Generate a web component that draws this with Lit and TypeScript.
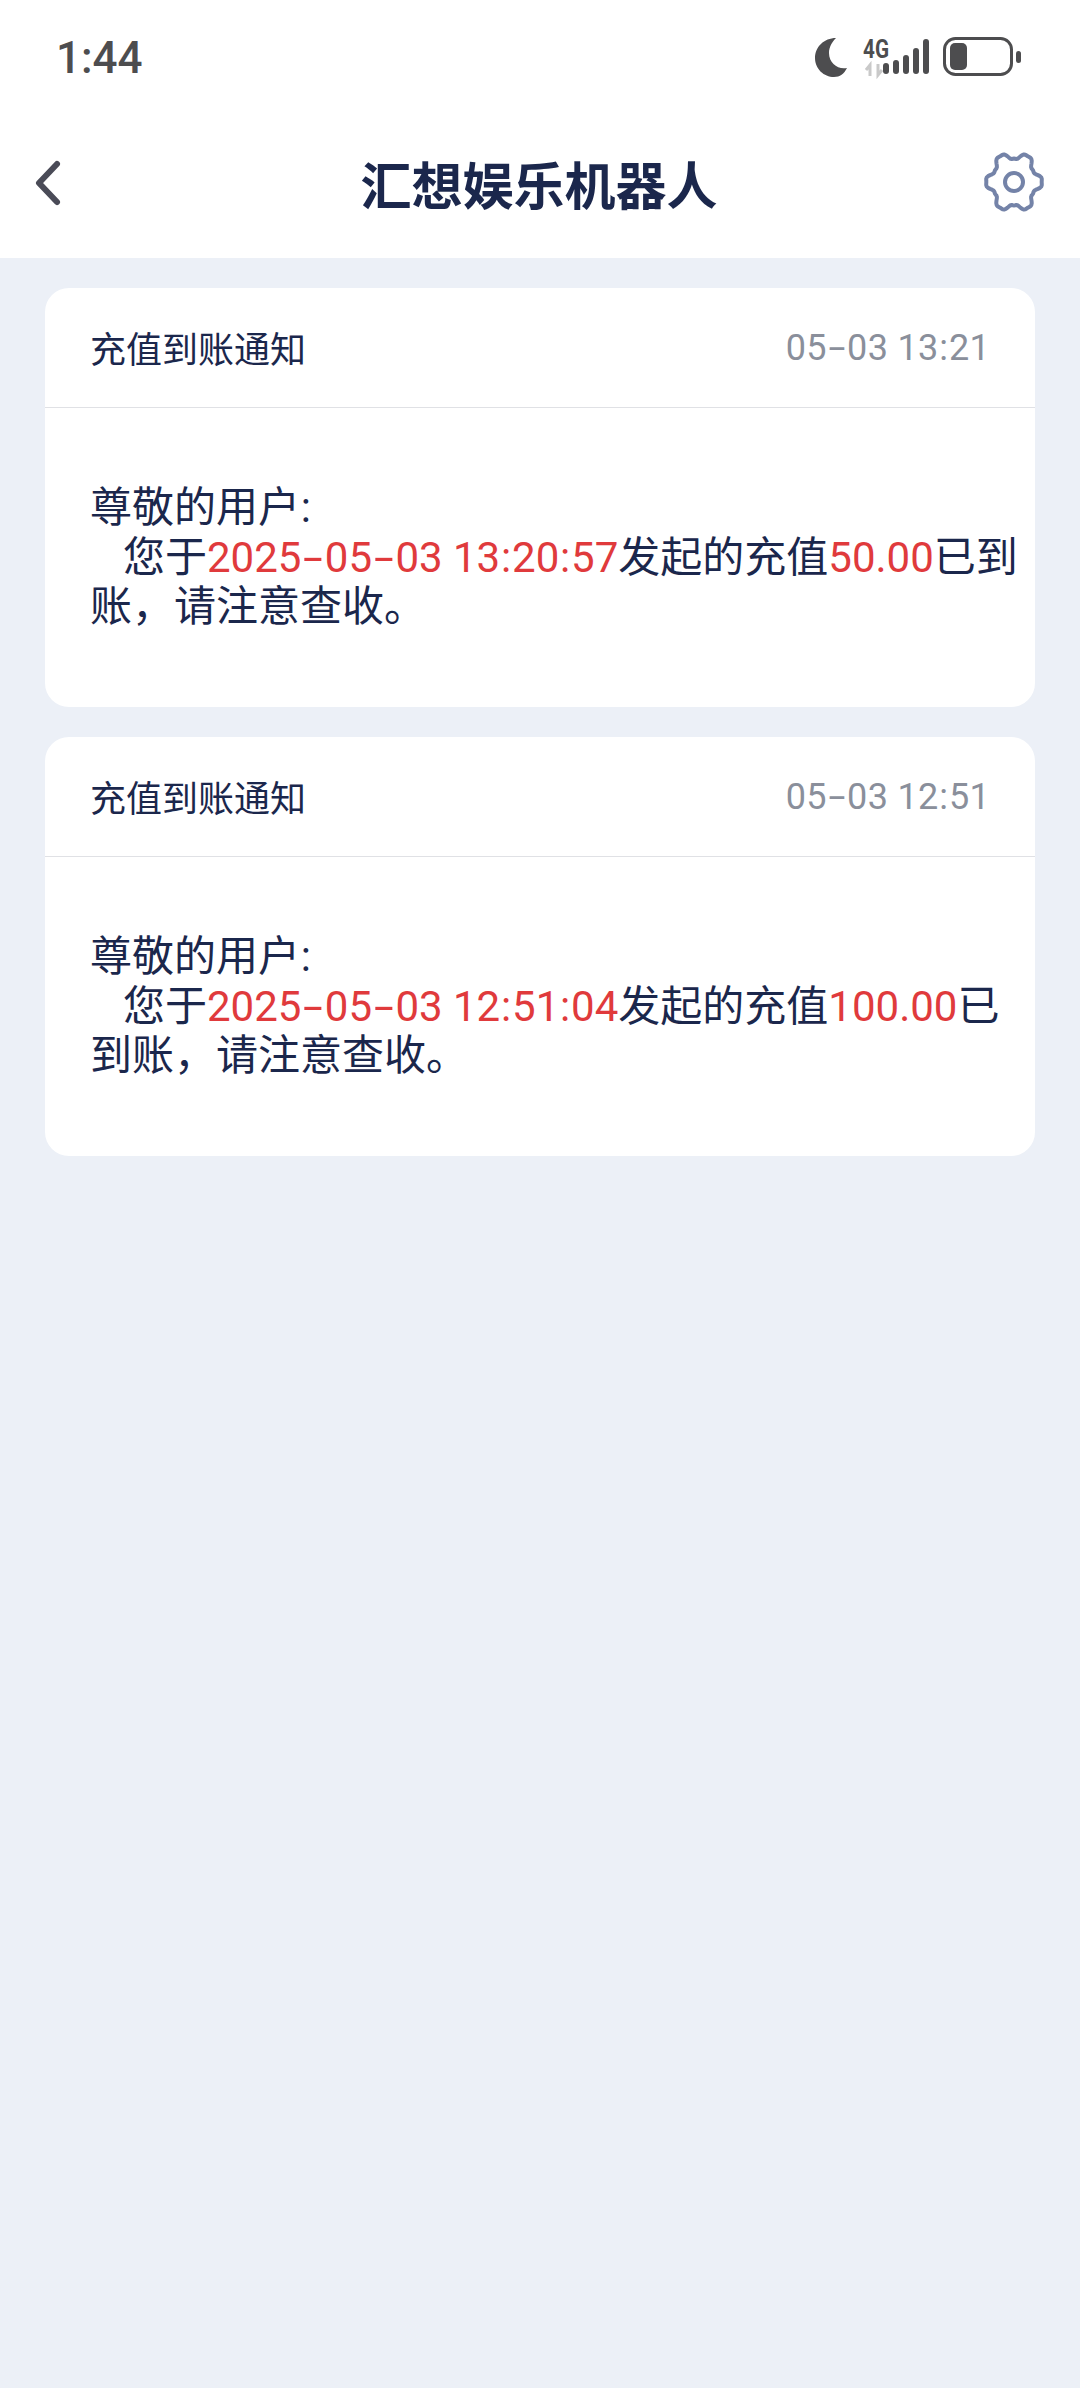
import { LitElement, css, html, svg } from "lit";
import { customElement } from "lit/decorators.js";

type Notice = { time: string; sent: string; amount: string };

const notices: Notice[] = [
  { time: "05-03 13:21", sent: "2025-05-03 13:20:57", amount: "50.00" },
  { time: "05-03 12:51", sent: "2025-05-03 12:51:04", amount: "100.00" },
];

// six flat lobes around the centre of a 64 box
const gearPath = (() => {
  const pts: string[] = [];
  for (let deg = 0; deg < 360; deg += 3) {
    const a = (deg * Math.PI) / 180;
    const r = 24.8 + 3.6 * (Math.cos(6 * a) - 0.2 * Math.cos(18 * a));
    pts.push(`${(32 + r * Math.cos(a)).toFixed(2)} ${(31 + 1.07 * r * Math.sin(a)).toFixed(2)}`);
  }
  return `M${pts.join("L")}Z`;
})();

// the reference font draws wider hyphens and colons than Roboto
const spaced = (text: string) =>
  text.split(/([-:])/).map((part) => {
    if (part === "-") return html`<span class="dash">-</span>`;
    if (part === ":") return html`<span class="colon">:</span>`;
    return part;
  });

@customElement("app-root")
export class AppRoot extends LitElement {
  static styles = css`
    :host {
      display: block;
      min-height: 2388px;
      background: #ecf0f7;
      font-family: Roboto, "Noto Sans CJK SC", sans-serif;
      color: #1b274c;
    }

    .top {
      background: #fff;
      height: 258px;
    }

    .status {
      box-sizing: border-box;
      height: 112px;
      padding: 4px 55px 0 56px;
      display: flex;
      align-items: center;
      justify-content: space-between;
    }

    .clock {
      font-size: 44px;
      font-weight: 500;
      color: #4d4d4f;
    }

    .status-icons {
      display: block;
      margin-bottom: 6px;
    }

    .net {
      font-family: Roboto, sans-serif;
      font-size: 25px;
      font-weight: 700;
      fill: #4d4d4f;
    }

    .nav {
      height: 142px;
      padding: 0 34px 0 32px;
      display: grid;
      grid-template-columns: 1fr auto 1fr;
      align-items: center;
    }

    .nav svg {
      display: block;
    }

    .gear {
      justify-self: end;
    }

    .title {
      font-size: 51px;
      font-weight: 700;
    }

    .list {
      padding: 30px 45px;
      display: flex;
      flex-direction: column;
      gap: 30px;
    }

    .card {
      background: #fff;
      border-radius: 24px;
      height: 419px;
      display: flex;
      flex-direction: column;
    }

    .card-head {
      height: 119px;
      flex: none;
      padding: 0 45px;
      display: flex;
      align-items: center;
      justify-content: space-between;
      border-bottom: 1px solid #e0e1e5;
      font-size: 36px;
    }

    .label {
      position: relative;
      top: -1px;
    }

    .time {
      color: #8a8f9b;
      letter-spacing: 0.3px;
    }

    .card-body {
      flex: 1;
      display: flex;
      align-items: center;
      padding: 0 12px 0 45px;
      font-size: 42px;
      line-height: 49.5px;
    }

    .card-body p {
      margin: 0;
    }

    .indent {
      padding-left: 33px;
    }

    .red {
      color: #e03a3c;
    }

    .dash {
      display: inline-block;
      margin: 0 0.14em;
      transform: scaleX(1.7);
    }

    .colon {
      margin: 0 0.02em;
    }

    .comma {
      display: inline-block;
      width: 1em;
    }
  `;

  private notice(n: Notice) {
    return html`
      <section class="card">
        <div class="card-head">
          <span class="label">充值到账通知</span>
          <span class="time">${spaced(n.time)}</span>
        </div>
        <div class="card-body">
          <p>
            尊敬的用户${spaced(":")}<br /><span class="indent"></span>您于<span class="red">${spaced(n.sent)}</span>发起的充值<span class="red">${n.amount}</span>已到账<span class="comma">，</span>请注意查收。
          </p>
        </div>
      </section>
    `;
  }

  private statusIcons() {
    const bars = [
      [73, 33],
      [83, 30],
      [93, 25],
      [103, 18],
      [113, 9],
    ];
    return html`
      <svg class="status-icons" width="215" height="50" viewBox="0 0 215 50" fill="none">
        <path d="M26 8C14 8 5 17 5 28 5 39 14 47 24 47 30 47 34 44 37 38 28 40 19 33 19 23 19 17 22 12 26 8Z" fill="#4d4d4f" />
        <text class="net" x="53" y="28" textLength="26" lengthAdjust="spacingAndGlyphs">4G</text>
        <path d="M60 46V35l-4 5M68 34v11l4-5" stroke="#c9c9c9" stroke-width="3" />
        ${bars.map(([x, y]) => svg`<rect x=${x} y=${y} width="6" height=${44 - y} rx="3" fill="#4d4d4f" />`)}
        <rect x="134.5" y="8.5" width="67" height="36" rx="11" stroke="#4d4d4f" stroke-width="3" />
        <rect x="140" y="13" width="17" height="27" rx="5" fill="#4d4d4f" />
        <rect x="206" y="21" width="5" height="12" rx="2.5" fill="#4d4d4f" />
      </svg>
    `;
  }

  render() {
    return html`
      <div class="top">
        <div class="status">
          <span class="clock">1:44</span>
          ${this.statusIcons()}
        </div>
        <div class="nav">
          <svg width="32" height="50" viewBox="0 0 32 50" fill="none">
            <path d="M25 6 7 25l18 19" stroke="#4a4b57" stroke-width="6" stroke-linecap="round" stroke-linejoin="round" />
          </svg>
          <span class="title">汇想娱乐机器人</span>
          <svg class="gear" width="64" height="64" viewBox="0 0 64 64" fill="none" stroke="#7483a8" stroke-width="4">
            <circle cx="32" cy="31" r="9" />
            <path d=${gearPath} stroke-linejoin="round" />
          </svg>
        </div>
      </div>
      <div class="list">${notices.map((n) => this.notice(n))}</div>
    `;
  }
}
